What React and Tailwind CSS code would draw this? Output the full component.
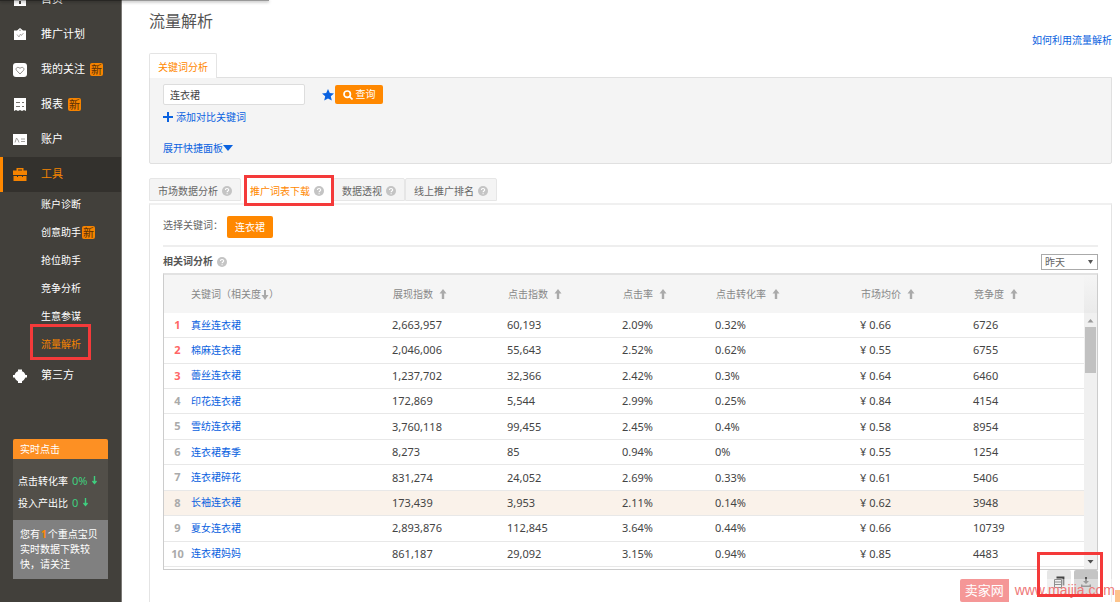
import React from "react";

const NAV = [
  { label: "首页", icon: "home" },
  { label: "推广计划", icon: "plan" },
  { label: "我的关注", icon: "heart", isNew: true },
  { label: "报表", icon: "report", isNew: true },
  { label: "账户", icon: "card" },
  { label: "工具", icon: "tool", active: true }
];

const SUB_NAV = [
  { label: "账户诊断" },
  { label: "创意助手", isNew: true },
  { label: "抢位助手" },
  { label: "竞争分析" },
  { label: "生意参谋" },
  { label: "流量解析", active: true }
];

const TABS = [
  { label: "市场数据分析" },
  { label: "推广词表下载", active: true },
  { label: "数据透视" },
  { label: "线上推广排名" }
];

const COLUMNS = ["展现指数", "点击指数", "点击率", "点击转化率", "市场均价", "竞争度"];

const ROWS = [
  ["真丝连衣裙", "2,663,957", "60,193", "2.09%", "0.32%", "¥ 0.66", "6726"],
  ["棉麻连衣裙", "2,046,006", "55,643", "2.52%", "0.62%", "¥ 0.55", "6755"],
  ["蕾丝连衣裙", "1,237,702", "32,366", "2.42%", "0.3%", "¥ 0.64", "6460"],
  ["印花连衣裙", "172,869", "5,544", "2.99%", "0.25%", "¥ 0.84", "4154"],
  ["雪纺连衣裙", "3,760,118", "99,455", "2.45%", "0.4%", "¥ 0.58", "8954"],
  ["连衣裙春季", "8,273", "85", "0.94%", "0%", "¥ 0.55", "1254"],
  ["连衣裙碎花", "831,274", "24,052", "2.69%", "0.33%", "¥ 0.61", "5406"],
  ["长袖连衣裙", "173,439", "3,953", "2.11%", "0.14%", "¥ 0.62", "3948"],
  ["夏女连衣裙", "2,893,876", "112,845", "3.64%", "0.44%", "¥ 0.66", "10739"],
  ["连衣裙妈妈", "861,187", "29,092", "3.15%", "0.94%", "¥ 0.85", "4483"]
];

function NavIcon({ name }) {
  return (
    <svg viewBox="0 0 14 14" className="h-[14px] w-[14px] shrink-0" fill="currentColor" aria-hidden="true">
      {name === "home" && <path fillRule="evenodd" d="M7 0l7 5h-1v8H1V5H0zM6 8v3h2V8z" />}
      {name === "plan" && (
        <>
          <path fillRule="evenodd" d="M4 2.500L7 0l3 2.500h3V12H1V2.500zM6 2.500h2L7 1.500z" />
          <path d="M4 6.500l2 2.500 1.500-3 1 1.500L10.500 5" fill="none" stroke="#9a9895" strokeWidth="0.8" />
        </>
      )}
      {name === "heart" && (
        <>
          <rect width="14" height="14" rx="3" />
          <path d="M7 11L3.500 7.300C2 5.500 4.500 3 7 5.300 9.500 3 12 5.500 10.500 7.300z" fill="none" stroke="#77746f" strokeWidth="0.8" />
        </>
      )}
      {name === "report" && (
        <>
          <path d="M1 0h12v13l-2-1-2 1-2-1-2 1-2-1-2 1z" />
          <path d="M3 4.500h4M3 8.500h4M9 4.500h2M9 8.500h2" stroke="#77746f" />
        </>
      )}
      {name === "card" && (
        <>
          <rect y="1" width="14" height="11" />
          <path d="M2 9.500L3.500 5 5 7l1 2.500M8 6h4M8 8.500h4" fill="none" stroke="#8a8885" strokeWidth="0.8" />
        </>
      )}
      {name === "tool" && (
        <>
          <path fillRule="evenodd" d="M3.500 2.500V0h7v2.500H14V7H0V2.500zM5 2.500h4v-1H5z" />
          <path d="M.5 8H4v1h1V8h4v1h1V8h3.500v5H.5z" />
        </>
      )}
      {name === "robot" && (
        <>
          <circle cx="7" cy="7.200" r="5.500" />
          <path d="M5 .5h4v2H5zM0 6h14v2.500H0zM5 12h4v2H5z" />
        </>
      )}
    </svg>
  );
}

function NewBadge() {
  return (
    <span className="rounded-xs bg-[#f58300] px-px text-[11px] leading-[13px] text-[#5a2f08]">新</span>
  );
}

function Help() {
  return (
    <svg viewBox="0 0 10 10" className="h-[10px] w-[10px] shrink-0" aria-hidden="true">
      <circle cx="5" cy="5" r="5" fill="#c4c4c4" />
      <path d="M3.400 4.100c0-2.200 3.300-2.100 3.300-.2C6.700 5 5.100 5 5.100 6.300M5.100 7.200v1.100" fill="none" stroke="#fff" strokeWidth="1.100" />
    </svg>
  );
}

function SortArrow({ down }) {
  return (
    <svg viewBox="0 0 8 10" className="inline-block h-[10px] w-[8px]" fill="#aaa" aria-hidden="true">
      {down ? <path d="M3 0h2v5h2.500L4 10 .5 5H3z" /> : <path d="M4 0l3.500 4.500H5.200V10H2.800V4.500H.5z" />}
    </svg>
  );
}

function DropArrow() {
  return (
    <svg viewBox="0 0 7 9" className="h-[9px] w-[7px]" aria-hidden="true">
      <path d="M3.500 0v7M1.500 5l2 2.500 2-2.500" fill="none" stroke="#3fcf7f" strokeWidth="1.400" />
    </svg>
  );
}

// Red frame laid over the element it calls out
function Highlight({ className }) {
  return <span className={`pointer-events-none absolute z-10 border-[3px] border-[#f43a3a] ${className}`} />;
}

function Sidebar() {
  return (
    <aside className="w-[122px] shrink-0 border-r border-[#7b7976] bg-[#42403b] text-white">
      <nav className="-mt-[18px]">
        {NAV.map((item) => (
          <a
            key={item.label}
            href="#"
            className={`flex h-[35px] items-center border-l-[3px] pl-[10px] text-[11px] ${
              item.active ? "border-[#f80] bg-[#33312d] text-[#f58300]" : "border-transparent"
            }`}
          >
            <NavIcon name={item.icon} />
            <span className="ml-[14px] mr-[5px]">{item.label}</span>
            {item.isNew && <NewBadge />}
          </a>
        ))}
        <div className="-mt-[2px]">
          {SUB_NAV.map((item) => (
            <a
              key={item.label}
              href="#"
              className={`relative flex h-7 items-center pl-[41px] text-[10px] ${item.active ? "text-[#f58300]" : ""}`}
            >
              <span className="mr-px">{item.label}</span>
              {item.isNew && <NewBadge />}
              {item.active && <Highlight className="-top-[6px] left-[30px] h-[36px] w-[61px]" />}
            </a>
          ))}
        </div>
        <a href="#" className="flex h-[35px] items-center pl-[13px] text-[11px]">
          <NavIcon name="robot" />
          <span className="ml-[14px]">第三方</span>
        </a>
      </nav>

      <section className="mx-[13px] mt-[46px] overflow-hidden rounded-t-xs bg-[#524f49] text-[10px]">
        <h2 className="h-[20px] bg-[#fd9023] pl-[7px] leading-[20px]">实时点击</h2>
        <div className="flex h-[61px] flex-col justify-center pl-[5px] pt-[4px] leading-[22px]">
          <p className="flex items-center gap-1">
            点击转化率 <span className="text-[11px] text-[#3fcf7f]">0%</span> <DropArrow />
          </p>
          <p className="flex items-center gap-1">
            投入产出比 <span className="text-[11px] text-[#3fcf7f]">0</span> <DropArrow />
          </p>
        </div>
        <p className="bg-[#808080] py-[7px] pl-[7px] pr-[5px] leading-[15px]">
          您有<b className="px-px text-[#f80]">1</b>个重点宝贝实时数据下跌较快，请关注
        </p>
      </section>
    </aside>
  );
}

function SearchPanel() {
  return (
    <section>
      <div className="relative flex">
        <button className="-mb-px h-[25px] rounded-t-xs border border-b-0 border-[#e4e4e4] bg-white px-[8px] pt-[3px] text-[10px] text-[#f80]">
          关键词分析
        </button>
      </div>
      <div className="rounded-b-xs border border-[#e0e0e0] bg-[#f4f4f4] px-[13px] pb-[7px] pt-[6px] text-[10px] text-[#0a62e0]">
        <div className="flex items-center">
          <input
            aria-label="关键词"
            defaultValue="连衣裙"
            className="h-[21px] w-[142px] rounded-xs border border-[#ddd] bg-white px-[6px] text-[#444]"
          />
          <svg viewBox="0 0 12 12" className="ml-[17px] h-3 w-3" fill="#0a62e0" aria-hidden="true">
            <path d="M6 0l1.800 4 4.200.4-3.200 2.900 1 4.300L6 9.400l-3.800 2.200 1-4.300L0 4.400 4.200 4z" />
          </svg>
          <button className="ml-px flex h-[19px] w-[48px] items-center justify-center gap-[3px] rounded-xs bg-[#f80] text-white">
            <svg viewBox="0 0 10 10" className="h-[10px] w-[10px]" fill="none" stroke="#fff" strokeWidth="1.700" aria-hidden="true">
              <circle cx="4.200" cy="4.200" r="3.200" />
              <path d="M6.500 6.500l3 3" />
            </svg>
            查询
          </button>
        </div>
        <a href="#" className="mt-[4px] flex h-[16px] items-center gap-[3px]">
          <svg viewBox="0 0 10 10" className="h-[10px] w-[10px]" stroke="currentColor" strokeWidth="2" aria-hidden="true">
            <path d="M5 0v10M0 5h10" />
          </svg>
          添加对比关键词
        </a>
        <a href="#" className="mt-[15px] flex h-[16px] items-center">
          展开快捷面板
          <svg viewBox="0 0 10 6" className="h-[6px] w-[10px]" fill="currentColor" aria-hidden="true">
            <path d="M0 0h10L5 6z" />
          </svg>
        </a>
      </div>
    </section>
  );
}

function KeywordTable() {
  return (
    <div className="flex border border-t-2 border-[#ccc] border-t-[#e2e2e2]">
      <table className="mb-[2px] h-[292px] min-w-0 flex-1 table-fixed border-collapse text-left text-[11px] text-[#444]">
        <colgroup>
          <col className="w-[27px]" />
          <col className="w-[200px]" />
          <col className="w-[115px]" />
          <col className="w-[115px]" />
          <col className="w-[93px]" />
          <col className="w-[145px]" />
          <col className="w-[113px]" />
          <col className="w-[112px]" />
        </colgroup>
        <thead>
          <tr className="h-[38px] bg-[#f5f5f5] text-[10px] text-[#888]">
            <th />
            <th className="font-normal">
              关键词（相关度<SortArrow down />）
            </th>
            {COLUMNS.map((c) => (
              <th key={c} className="pl-[2px] font-normal">
                <span className="flex items-center gap-[6px]">
                  {c} <SortArrow />
                </span>
              </th>
            ))}
          </tr>
        </thead>
        <tbody>
          {ROWS.map(([word, ...cells], i) => (
            <tr key={word} className={`border-b border-[#e8e8e8] ${i === 7 ? "bg-[#faf2ea]" : ""}`}>
              <td className={`text-center font-bold ${i < 3 ? "text-[#f66]" : "text-[#aaa]"}`}>{i + 1}</td>
              <td className="text-[10px]">
                <a href="#" className="text-[#0a62e0]">{word}</a>
              </td>
              {cells.map((cell, j) => (
                <td key={j} className="pl-px leading-4">{cell}</td>
              ))}
            </tr>
          ))}
        </tbody>
      </table>

      {/* Scroll track */}
      <div className="flex w-[13px] shrink-0 flex-col bg-[#f0f0f0]">
        <div className="h-[38px] bg-linear-to-b from-[#f5f5f5] to-[#eaeaea]" />
        <svg viewBox="0 0 13 14" className="h-[14px] w-[13px]" fill="#999" aria-hidden="true">
          <path d="M3.500 9.500h6l-3-3.500z" />
        </svg>
        <div className="mx-px h-[46px] bg-[#c1c1c1]" />
        <svg viewBox="0 0 13 14" className="mt-auto h-[14px] w-[13px]" fill="#505050" aria-hidden="true">
          <path d="M3.500 5h6l-3 3.500z" />
        </svg>
      </div>
    </div>
  );
}

function Watermark() {
  return (
    <div className="absolute bottom-0 right-0 flex h-[23px] items-center">
      <span className="h-[23px] rounded-l-xs bg-[#f59797] px-[5px] text-[13px] leading-[23px] text-white">卖家网</span>
      <span className="h-[23px] bg-white/40 pl-[6px] font-['Liberation_Sans'] text-[14px] leading-[22px] text-[#ee7777]">
        www.maijia.com
      </span>
      <span className="h-3 w-[5px] self-end bg-[#fdc48c]" />
    </div>
  );
}

export default function App() {
  return (
    <div className="relative flex h-screen overflow-hidden bg-white font-['Noto_Sans','Noto_Sans_CJK_SC',sans-serif] text-[#666]">
      <Sidebar />
      <main className="min-w-0 flex-1 pl-[27px] pr-[8px] pt-[9px]">
        <header className="flex justify-between">
          <h1 className="text-[16px] leading-[24px] text-[#555]">流量解析</h1>
          <a href="#" className="mt-[23px] text-[10px] leading-4 text-[#0a62e0]">如何利用流量解析</a>
        </header>
        <div className="mt-[5px]">
          <SearchPanel />
        </div>

        <div className="mt-[14px] flex text-[10px]">
          {TABS.map((tab) => (
            <button
              key={tab.label}
              className={`relative flex h-[23px] items-center gap-1 rounded-t-xs border pl-[8px] pr-[8px] pt-[3px] ${
                tab.active ? "border-white bg-white text-[#f80]" : "border-[#e6e6e6] bg-[#f4f4f4]"
              }`}
            >
              {tab.label} <Help />
              {tab.active && <Highlight className="-top-[4px] left-[2px] h-[31px] w-[90px]" />}
            </button>
          ))}
        </div>

        <section className="mt-[2px] min-h-[420px] border border-t-2 border-[#e4e4e4] border-t-[#f0f0f0] px-[13px] text-[10px]">
          <div className="flex h-[42px] items-center border-b-2 border-[#eee]">
            选择关键词：
            <button className="ml-[4px] mt-[4px] h-[22px] rounded-xs bg-[#f80] px-[8px] text-white">连衣裙</button>
          </div>
          <div className="flex h-[26px] items-center gap-1 pt-[3px]">
            <h2 className="font-bold text-[#555]">相关词分析</h2>
            <Help />
            <div className="relative ml-auto">
              <select
                aria-label="日期"
                className="block h-[16px] w-[57px] appearance-none border border-[#aaa] bg-white pl-[3px] leading-none text-[#666]"
              >
                <option>昨天</option>
              </select>
              <svg viewBox="0 0 5 4" className="pointer-events-none absolute right-[5px] top-[6px] h-1 w-[5px]" fill="#555" aria-hidden="true">
                <path d="M0 0h5L2.500 4z" />
              </svg>
            </div>
          </div>
          <KeywordTable />
          <div className="relative flex justify-end gap-[3px]">
            <button aria-label="复制" className="flex h-[24px] w-[24px] items-center justify-center rounded-xs bg-[#e6e6e6]">
              <svg viewBox="0 0 12 12" className="h-3 w-3" fill="none" stroke="#444" aria-hidden="true">
                <path d="M3.500 1.500h7v8" strokeWidth="1.800" />
                <path d="M1.500 3.500h7v8h-7zM2 6h6M2 8.500h6" />
              </svg>
            </button>
            <button aria-label="下载" className="flex h-[24px] w-[24px] items-center justify-center rounded-xs bg-[#c4c4c4]">
              <svg viewBox="0 0 12 12" className="h-3 w-3" fill="#555" aria-hidden="true">
                <path d="M5 1h2v4h2L6 8 3 5h2zM1 8.500h1.500v1h7v-1H11V11H1z" />
              </svg>
            </button>
            <Highlight className="-right-[5px] -top-[18px] h-[45px] w-[66px]" />
          </div>
        </section>
      </main>
      {/* Bottom edge of the bar that sits over the page */}
      <div className="absolute left-0 top-0 h-px w-[269px] bg-black/40 shadow-[0_1px_3px_rgba(0,0,0,0.5)]" />
      <Watermark />
    </div>
  );
}
